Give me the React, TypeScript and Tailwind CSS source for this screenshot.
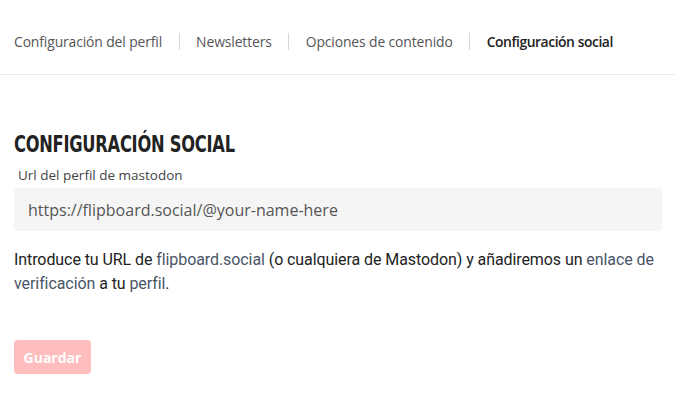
export default function App() {
  const tabs = ["Configuración del perfil", "Newsletters", "Opciones de contenido", "Configuración social"];
  return (
    <div className="w-[675px] h-[411px] bg-white overflow-hidden" style={{ fontFamily: '"Open Sans", sans-serif' }}>
      <div className="pl-[14px] border-b border-[#ebebeb] h-[75px] flex items-center pt-[10px]">
        {tabs.map((t, i) => (
          <div key={t} className="flex items-center">
            {i > 0 && <div className="w-px h-[17px] bg-[#d6d6d6] mx-[16.5px]" />}
            <span className={`text-[13.9px] ${i === 3 ? "text-[#222] font-semibold tracking-[-0.45px]" : "text-[#555] font-medium tracking-[-0.12px]"}`}>{t}</span>
          </div>
        ))}
      </div>
      <div className="pl-[14px] w-[662px]">
        <h2 className="mt-[56px] text-[23px] leading-[26px] font-bold text-[#222] uppercase tracking-[-0.3px] origin-left scale-x-[0.785] whitespace-nowrap" style={{ fontFamily: '"DejaVu Sans Condensed", sans-serif' }}>
          Configuración social
        </h2>
        <div className="mt-[9px] ml-[4px] text-[13.5px] leading-[18px] text-[#444] font-medium">Url del perfil de mastodon</div>
        <div className="mt-[4px] h-[43px] bg-[#f5f5f5] rounded-[4px] flex items-center px-[14px] text-[16px] text-[#555]">
          https://flipboard.social/@your-name-here
        </div>
        <p className="mt-[17px] text-[16px] leading-[24px] text-[#222]" style={{ fontFamily: '"Roboto", sans-serif', letterSpacing: "-0.08px" }}>
          Introduce tu URL de <span className="text-[#4a5568]">flipboard.social</span> (o cualquiera de Mastodon) y añadiremos un{" "}
          <span className="text-[#4a5568]">enlace de verificación</span> a tu <span className="text-[#4a5568]">perfil</span>.
        </p>
        <button className="mt-[44px] h-[34px] w-[77px] bg-[#ffbdbd] rounded-[4px] text-white text-[14px] font-bold">Guardar</button>
      </div>
    </div>
  );
}
